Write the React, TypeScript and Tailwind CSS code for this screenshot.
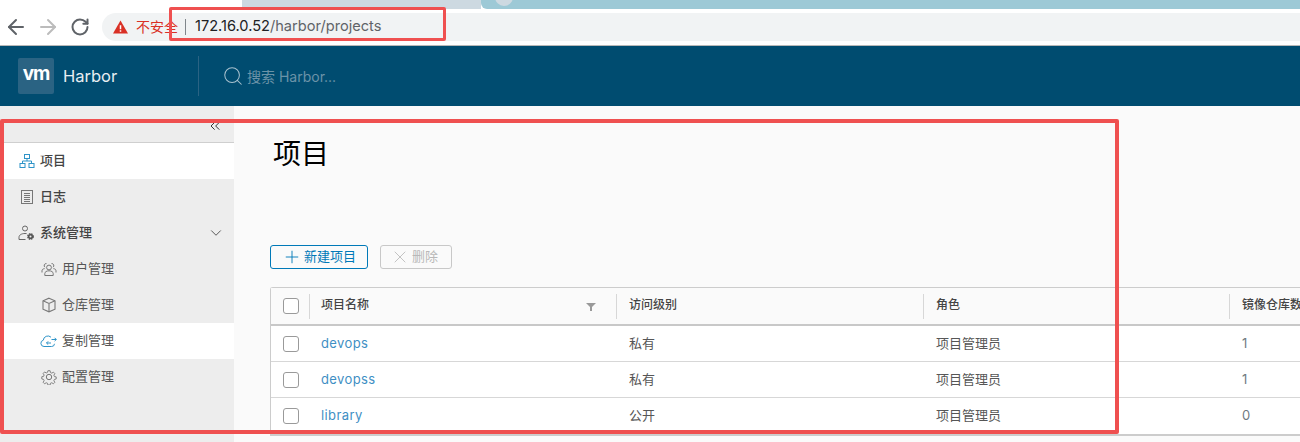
import { ArrowLeft, ArrowRight, RotateCw, Search, ChevronDown, ChevronsLeft, Plus, X } from "lucide-react";
import type { ReactNode } from "react";

const FONT = "font-['Inter','Noto_Sans_CJK_SC',sans-serif]";

const ROWS = [
  ["devops", "私有", "项目管理员", "1"],
  ["devopss", "私有", "项目管理员", "1"],
  ["library", "公开", "项目管理员", "0"],
];

function TreeIcon() {
  return (
    <svg width="16" height="16" viewBox="0 0 16 16" fill="none" stroke="#2f94c8" strokeWidth="1">
      <rect x="5.5" y="1.5" width="5" height="4" />
      <rect x="1" y="10.5" width="5" height="4" />
      <rect x="10" y="10.5" width="5" height="4" />
      <path d="M8 5.5V8M3.5 10.5V8h9v2.5" />
    </svg>
  );
}

function LogIcon() {
  return (
    <svg width="14" height="16" viewBox="0 0 14 16" fill="none" stroke="#777" strokeWidth="1">
      <rect x="1.5" y="1.5" width="11" height="13" />
      <path d="M4 4.5h6M4 6.5h6M4 8.5h6M4 10.5h6M4 12.5h6" strokeWidth="1" />
    </svg>
  );
}

function AdminIcon() {
  return (
    <svg width="17" height="16" viewBox="0 0 17 16" fill="none" stroke="#666" strokeWidth="1">
      <circle cx="7" cy="3.5" r="2.5" />
      <path d="M1 14.5v-2.2C1 10 3.5 8.5 7 8.5c.6 0 1.1 0 1.6.1M1 14.5h6.5" />
      <circle cx="12.5" cy="11.5" r="2.6" fill="#555" stroke="#555" strokeWidth="1.6" strokeDasharray="1.4 .7" />
      <circle cx="12.5" cy="11.5" r="1" fill="#ededed" stroke="none" />
    </svg>
  );
}

function UsersIcon() {
  return (
    <svg width="16" height="16" viewBox="0 0 16 16" fill="none" stroke="#777" strokeWidth="1">
      <circle cx="8" cy="6.5" r="2.4" />
      <path d="M3.8 14.5v-2c0-1.6 1.8-2.7 4.2-2.7s4.2 1.1 4.2 2.7v2z" />
      <path d="M5.5 2.6a2 2 0 0 0-1.5 3.6M10.5 2.6a2 2 0 0 1 1.5 3.6M1 11.5V9.8C1 8.5 2 7.8 3.6 7.6M15 11.5V9.8c0-1.3-1-2-2.6-2.2" />
    </svg>
  );
}

function CubeIcon() {
  return (
    <svg width="16" height="16" viewBox="0 0 16 16" fill="none" stroke="#777" strokeWidth="1.1">
      <path d="M8 1.2l6 2.6v8.4l-6 2.6-6-2.6V3.8z" />
      <path d="M2 3.8l6 2.7 6-2.7M8 6.5v8.3" />
    </svg>
  );
}

function CloudIcon() {
  return (
    <svg width="17" height="14" viewBox="0 0 17 14" fill="none" stroke="#2f94c8" strokeWidth="1">
      <path d="M11.5 12.5H4a3.2 3.2 0 0 1-.7-6.3A4.6 4.6 0 0 1 11 3.2M14.5 9.800a2.900 2.900 0 0 1-3 2.700" />
      <path d="M6.500 9h4.500M8.200 7.300L6.500 9l1.700 1.600M11.500 5.500h4.800M14.600 3.800l1.700 1.700-1.700 1.600" />
    </svg>
  );
}

function GearIcon() {
  return (
    <svg width="16" height="16" viewBox="0 0 16 16" fill="none" stroke="#777" strokeWidth="1">
      <circle cx="8" cy="8" r="2.7" />
      <path d="M6.800 1h2.400l.4 2 1.500.7 1.800-1.100 1.600 1.700-1.100 1.700.6 1.500 2 .4v2.300l-2 .5-.6 1.400 1.100 1.800-1.600 1.600-1.800-1.100-1.500.6-.4 2H6.800l-.4-2-1.500-.6-1.800 1.100-1.600-1.600 1.100-1.800-.6-1.400-2-.5V7.700l2-.4.6-1.500-1.100-1.700 1.600-1.700 1.800 1.100 1.500-.7z" transform="translate(.8 .8) scale(.9)" />
    </svg>
  );
}

function NavItem({ icon, label, active, bold, sub, end }: { icon: ReactNode; label: string; active?: boolean; bold?: boolean; sub?: boolean; end?: ReactNode }) {
  return (
    <div className={`flex h-9 items-center ${sub ? "pl-[40px]" : "pl-[18px]"} ${active ? "bg-white" : ""}`}>
      <span className="flex w-[17px] justify-center">{icon}</span>
      <span className={`ml-[5px] text-[13px] ${bold ? "font-medium text-[#444]" : "text-[#565656]"}`}>{label}</span>
      {end}
    </div>
  );
}

function Checkbox() {
  return <span className="block h-4 w-4 rounded-[3px] border border-[#9a9a9a] bg-white" />;
}

export default function App() {
  return (
    <div className={`relative h-[442px] w-[1300px] overflow-hidden bg-white ${FONT}`}>
      {/* browser chrome */}
      <div className="flex h-[9px]">
        <div className="w-[242px] bg-white" />
        <div className="w-[239px] bg-[#cdd9e1]" />
        <div className="relative flex-1 rounded-bl-[6px] bg-[#9dc9d6]">
          <div className="absolute left-[14px] top-[-12px] h-[18px] w-[18px] rounded-full bg-[#cdd9e1]" />
        </div>
      </div>
      <div className="flex h-[37px] items-start border-b border-[#b8b8b8] pt-[4px]">
        <div className="flex h-[28px] w-[102px] items-center">
          <ArrowLeft size={24} className="ml-[4px] text-[#5f6368]" />
          <ArrowRight size={24} className="ml-[8px] text-[#bcbcbc]" />
          <RotateCw size={20} strokeWidth={2.4} className="ml-[10px] text-[#5f6368]" />
        </div>
        <div className="flex h-[28px] flex-1 items-center rounded-l-[14px] bg-[#f1f3f4] pl-[11px]">
          <svg width="15" height="14" viewBox="0 0 16 14">
            <path d="M8 0l8 14H0z" fill="#d93025" />
            <path d="M7.200 5h1.600v4.500H7.200zM7.200 10.500h1.600V12H7.200z" fill="#fff" />
          </svg>
          <span className="ml-[8px] pb-[2px] text-[14px] text-[#d93025]">不安全</span>
          <span className="ml-[7px] h-[16px] w-px bg-[#80868b]" />
          <span className="ml-[9px] text-[14.6px] text-[#202124]">
            172.16.0.52<span className="text-[#5f6368]">/harbor/projects</span>
          </span>
        </div>
      </div>

      {/* app header */}
      <header className="flex h-[60px] items-center bg-[#004c70]">
        <div className="ml-[18px] flex h-9 w-9 items-center justify-center rounded-[2px] bg-[#2a6383] pb-[3px] text-[19px] font-bold tracking-[-1px] text-white">vm</div>
        <span className="ml-[9px] w-[54px] text-[16.5px] text-[#e8eef2]">Harbor</span>
        <div className="ml-[81px] h-10 w-px bg-[#2a6383]" />
        <Search size={22} strokeWidth={1.1} className="ml-[23px] text-[#a9c2cf]" />
        <span className="ml-[3px] text-[14px] text-[#6b93a8]">搜索 Harbor...</span>
      </header>

      <div className="flex h-[336px]">
        {/* sidebar */}
        <aside className="w-[234px] shrink-0 bg-[#ededed]">
          <div className="flex h-[37px] justify-end border-b border-[#cfcfcf] pr-[11px] pt-[12px]">
            <ChevronsLeft size={16} strokeWidth={1.5} className="text-[#333]" />
          </div>
          <NavItem active bold icon={<TreeIcon />} label="项目" />
          <NavItem bold icon={<LogIcon />} label="日志" />
          <NavItem
            bold
            icon={<AdminIcon />}
            label="系统管理"
            end={<ChevronDown size={18} strokeWidth={1.3} className="ml-auto mr-[9px] text-[#555]" />}
          />
          <NavItem sub icon={<UsersIcon />} label="用户管理" />
          <NavItem sub icon={<CubeIcon />} label="仓库管理" />
          <NavItem sub active icon={<CloudIcon />} label="复制管理" />
          <NavItem sub icon={<GearIcon />} label="配置管理" />
        </aside>

        {/* main */}
        <main className="flex-1 bg-[#fafafa] pl-[36px]">
          <h1 className="ml-[3px] mt-[29px] text-[28px] leading-[38px] text-black">项目</h1>
          <div className="mt-[72px] flex gap-3">
            <button className="flex h-[24px] w-[98px] items-center justify-center rounded-[3px] border border-[#0079b8] text-[13px] text-[#0079b8]">
              <Plus size={20} strokeWidth={1.1} className="mr-[2px]" />
              新建项目
            </button>
            <button className="flex h-[24px] w-[72px] items-center justify-center rounded-[3px] border border-[#c8c8c8] pr-[4px] text-[13px] text-[#b8b8b8]">
              <X size={20} strokeWidth={1} className="mr-[2px]" />
              删除
            </button>
          </div>

          <div className="mt-[18px] w-[1040px] rounded-tl-[3px] border-b-2 border-l border-t border-[#cccccc]">
            <div className="flex h-[38px] items-center border-b-2 border-[#c8c8c8] bg-[#fafafa] text-[12px] font-medium text-[#444]">
              <div className="flex h-[25px] w-[39px] shrink-0 items-center border-r border-[#d7d7d7] pl-[12px]">
                <Checkbox />
              </div>
              <div className="flex h-[25px] w-[307px] shrink-0 items-center border-r border-[#d7d7d7] pb-[3px] pl-[11px] pr-[20px]">
                项目名称
                <svg className="ml-auto mt-[5px]" width="10" height="8" viewBox="0 0 10 8"><path d="M0 0h10L6 4v4H4V4z" fill="#999" /></svg>
              </div>
              <div className="flex h-[25px] w-[307px] shrink-0 items-center border-r border-[#d7d7d7] pb-[3px] pl-[12px]">访问级别</div>
              <div className="flex h-[25px] w-[306px] shrink-0 items-center border-r border-[#d7d7d7] pb-[3px] pl-[12px]">角色</div>
              <div className="flex h-[25px] flex-1 items-center whitespace-nowrap pb-[3px] pl-[12px]">镜像仓库数</div>
            </div>
            {ROWS.map(([name, level, role, count], i) => (
              <div key={name} className={`flex h-[36px] items-center bg-white text-[13px] text-[#565656] ${i < 2 ? "border-b border-[#d7d7d7]" : ""}`}>
                <div className="w-[39px] shrink-0 pl-[12px]"><Checkbox /></div>
                <div className="w-[307px] shrink-0 pl-[11px] tracking-[0.4px] text-[#3f8fc4]">{name}</div>
                <div className="w-[307px] shrink-0 pl-[12px]">{level}</div>
                <div className="w-[306px] shrink-0 pl-[12px]">{role}</div>
                <div className="flex-1 pl-[12px] text-[#6f7a80]">{count}</div>
              </div>
            ))}
          </div>
        </main>
      </div>

      {/* red annotation boxes */}
      <div className="absolute left-[169px] top-[7px] h-[34px] w-[277px] rounded-[2px] border-[3px] border-[#ef5050]" />
      <div className="absolute left-0 top-[119px] h-[315px] w-[1119px] rounded-[2px] border-[4px] border-[#ef5050]" />
    </div>
  );
}
